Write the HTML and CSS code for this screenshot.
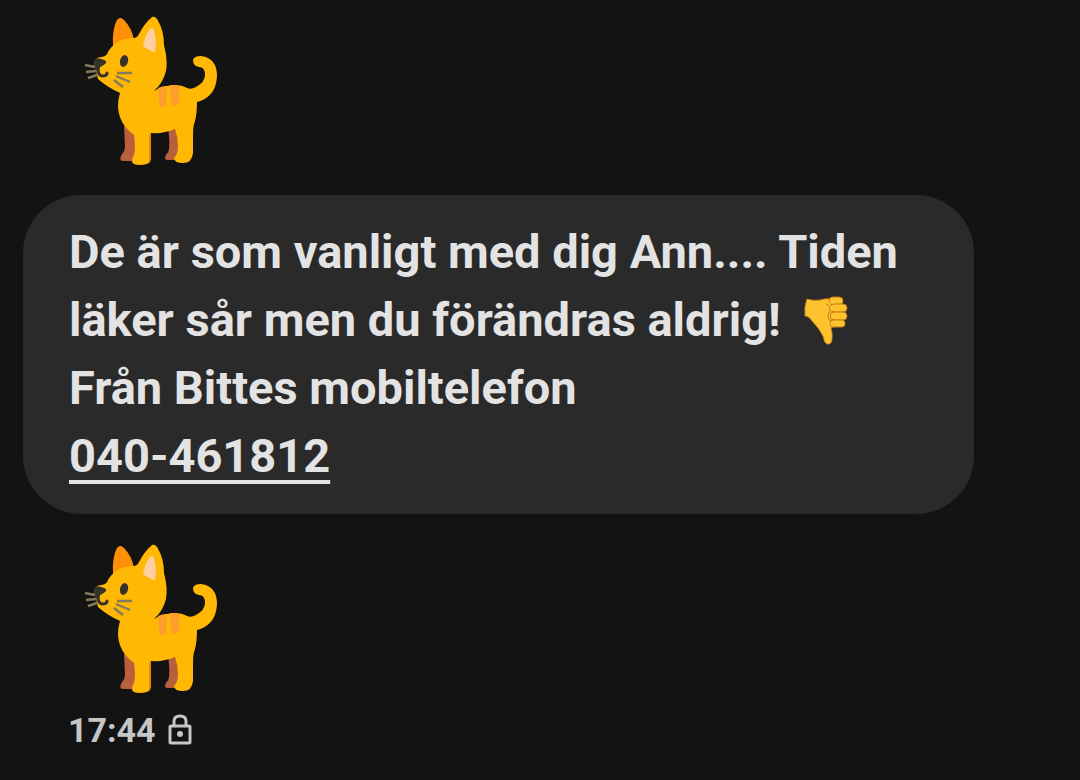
FILE: index.html
```html
<!DOCTYPE html>
<html lang="sv">
<head>
  <meta charset="UTF-8">
  <meta name="viewport" content="width=device-width, initial-scale=1.0">
  <title>Meddelanden</title>
  <link rel="stylesheet" href="styles.css">
</head>
<body>
  <svg class="defs" width="0" height="0" aria-hidden="true">
    <symbol id="cat" viewBox="80 12 142 156">
      <!-- far legs -->
      <path fill="#b8603c" d="M124 125 L125 147 Q125 151 122 154 Q118 161 123 161 L135 161 L138 132 Z"/>
      <path fill="#b8603c" d="M168 128 Q170 140 169 149 Q169 152 166 155 Q163 160 168 160 L177 160 L180 130 Z"/>
      <!-- far ear -->
      <path fill="#ff8f05" d="M113 46 Q112 29 117 20 Q120 16 124 20 Q132 28 134 40 Z"/>
      <!-- head, body and tail -->
      <path fill="#ffb803" d="M134 38 Q137 38 139 34 Q144 24 151 18 Q154 15 157 19 Q164 30 164 45 Q168 60 166 71 Q163 83 154 91 Q162 86 174 85 Q182 85 187 88 Q191 90 196 87 Q205 82 205 75 Q205 67 199 67 Q193 66 193 60 Q194 56 201 56 Q217 58 217 76 Q216 97 197 102 Q197 113 195 121 Q193 126 193 134 L193 153 Q192 163 183 163 Q174 163 174 158 Q178 154 178 146 Q178 137 175 129 Q164 134 151 133 L150 162 Q147 165 140 165 Q132 165 132 161 Q132 158 134 155 Q136 147 134 135 Q119 124 118 107 Q118 99 120 93 Q107 87 98 79 L94 62 Q96 57 102 57 Q107 56 108 52 Q116 38 134 38 Z"/>
      <path fill="#e58a10" d="M149 134 L151 133 L151 160 L149 163 Z"/>
      <path fill="#ffcfa1" d="M143 46 Q145 34 151 28 Q153 27 154 31 Q157 40 155 52 Q149 51 143 46 Z"/>
      <path fill="#ff9e2e" d="M158 88 Q162 86 167 86 L166 104 Q165 107 162 107 Q159 107 159 103 Z M170 85 Q175 85 179 86 L179 102 Q178 106 175 106 Q171 106 171 102 Z"/>
      <!-- face -->
      <ellipse cx="124" cy="61" rx="4" ry="6" transform="rotate(14 124 61)" fill="#33332a"/>
      <path fill="#33332a" d="M94 61 Q96 57 101 59 Q107 60 106 63 Q103 66 100 67 L99 72 L95 70 Z"/>
      <path fill="none" stroke="#33332a" stroke-width="3" stroke-linecap="round" d="M98 69 Q98 75 102 76 Q107 76 107 73"/>
      <path fill="none" stroke="#827a58" stroke-width="2.4" d="M85 65 L95 67 M86 72 L96 71 M88 78 L97 75 M117 73 L132 73 M116 76 L130 82 M114 80 L123 87"/>
    </symbol>
  </svg>

  <main class="thread">
    <svg class="sticker" role="img" aria-label="Katt"><use href="#cat"/></svg>

    <div class="bubble">
      <p>De är som vanligt med dig Ann.... Tiden<br>
      läker sår men du förändras aldrig!
      <svg class="thumb" viewBox="0 0 45 50" role="img" aria-label="Tummen ner">
        <path fill="#fcc32f" stroke="#c77a16" stroke-width=".8" d="M3 3 Q9 5 16 4 Q22 2 27 3 L32 30 L27 32 Q29 38 28 44 Q27 49 23 48 Q20 47 19 40 Q15 32 8 25 Q5 20 1 20 Q0 10 3 3 Z"/>
        <g fill="#fcc32f" stroke="#c77a16">
          <rect x="25" y="1" width="14" height="8" rx="4"/>
          <rect x="26" y="8" width="17" height="8" rx="4"/>
          <rect x="26" y="16" width="17" height="8" rx="4"/>
          <rect x="26" y="24" width="15" height="7" rx="3"/>
        </g>
        <path fill="#fcc32f" d="M16 5 Q24 3 26 7 L28 15 Q25 16 25 22 L26 28 L22 30 Z"/>
        <path fill="none" stroke="#c77a16" d="M22 8 Q26 9 26 15 Q22 19 26 25"/>
      </svg><br>
      Från Bittes mobiltelefon<br>
      <a href="tel:040461812">040-461812</a></p>
    </div>

    <svg class="sticker" role="img" aria-label="Katt"><use href="#cat"/></svg>

    <div class="status">
      <time>17:44</time>
      <svg class="lock" viewBox="0 0 24 32" role="img" aria-label="Krypterat">
        <rect x="2" y="12" width="20" height="17" rx="1" fill="none" stroke="#c6c6c6" stroke-width="3"/>
        <path d="M6 12 V7 Q6 2 12 2 Q18 2 18 7 V12" fill="none" stroke="#c6c6c6" stroke-width="3"/>
        <circle cx="12" cy="20" r="3" fill="#c6c6c6"/>
      </svg>
    </div>
  </main>
</body>
</html>
```

FILE: styles.css
```css
body {
  margin: 0;
  background: #131313;
  color: #e3e3e3;
  font-family: Roboto, "Liberation Sans", sans-serif;
}
.defs {
  position: absolute;
}
.thread {
  padding: 12px 23px 24px;
}
.sticker {
  display: block;
  width: 142px;
  height: 156px;
  margin-left: 57px;
}
.bubble {
  width: 92%;
  box-sizing: border-box;
  margin: 27px 0 26px;
  padding: 23px 46px 24px;
  background: #2a2a2a;
  border-radius: 58px;
}
.bubble p {
  margin: 0;
  font-size: 47px;
  line-height: 68px;
  font-weight: 700;
}
.bubble a {
  color: inherit;
  text-decoration: underline;
  text-decoration-thickness: 4px;
  text-underline-offset: 8px;
  text-decoration-skip-ink: none;
}
.thumb {
  width: 45px;
  height: 50px;
  margin-left: 12px;
  vertical-align: -10px;
}
.status {
  display: flex;
  align-items: center;
  gap: 12px;
  margin: 14px 0 0 45px;
  color: #c6c6c6;
  font-size: 34px;
  line-height: 40px;
  font-weight: 700;
}
.lock {
  width: 24px;
  height: 32px;
}
```
